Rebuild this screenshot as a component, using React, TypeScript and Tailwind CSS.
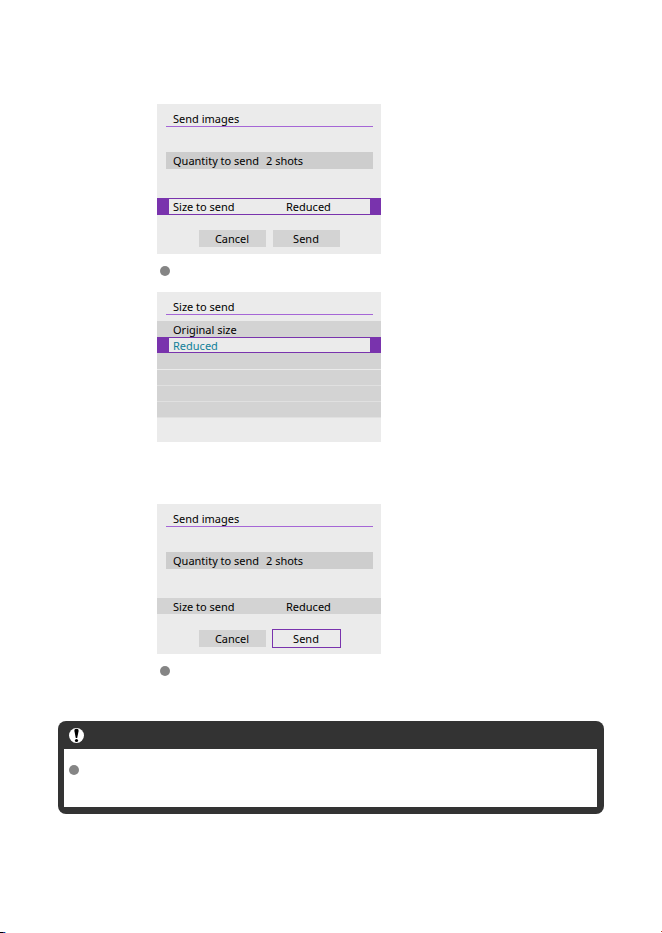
import type { ReactNode } from "react";

const Screen = ({ title, children }: { title: string; children: ReactNode }) => {
  return (
    <section className="flex min-h-[150px] w-56 flex-col bg-[#ebebeb] pt-[7px] text-[11px] leading-[15px] text-black">
      <h2 className="mr-2 ml-[9px] border-b border-[#a566d6] pl-[7px] font-normal">
        {title}
      </h2>
      {children}
    </section>
  );
};

const Quantity = () => {
  return (
    <div className="mt-[25px] mr-2 ml-[9px] flex h-[17px] items-center bg-[#cdcdcd] pl-[7px] whitespace-nowrap">
      <span className="w-[93px]">Quantity to send</span>
      <span>2 shots</span>
    </div>
  );
};

const Bullet = () => {
  return <span className="block size-[10px] rounded-full bg-[#858585]" />;
};

const SendImages = ({ active }: { active: "size" | "send" }) => {
  return (
    <Screen title="Send images">
      <Quantity />
      {active === "size" ? (
        <button className="mt-[29px] flex h-[17px] bg-[#7933ad] py-px pr-[11px] pl-3 text-left">
          <span className="flex h-[15px] flex-1 items-center bg-[#ebebeb] pl-1">
            <span className="w-[113px]">Size to send</span>
            <span>Reduced</span>
          </span>
        </button>
      ) : (
        <button className="mt-[29px] flex h-4 items-center bg-[#d3d3d3] pl-4 text-left">
          <span className="w-[113px]">Size to send</span>
          <span>Reduced</span>
        </button>
      )}
      <div className="mt-auto mb-[7px] flex h-[17px] items-center justify-center gap-[7px]">
        <button className="h-[17px] w-[67px] bg-[#d3d3d3]">Cancel</button>
        {active === "send" ? (
          <button className="h-[17px] w-[67px] bg-[#ebebeb] outline outline-[#7933ad]">
            Send
          </button>
        ) : (
          <button className="h-[17px] w-[67px] bg-[#d3d3d3]">Send</button>
        )}
      </div>
    </Screen>
  );
};

const SizeToSend = () => {
  return (
    <Screen title="Size to send">
      <div className="mt-[6px] flex flex-col">
        <button className="flex h-4 items-center bg-[#d3d3d3] pl-4">
          Original size
        </button>
        <button className="flex h-4 bg-[#7933ad] py-px pr-[11px] pl-3">
          <span className="flex h-[14px] flex-1 items-center bg-[#ebebeb] pl-1 text-[#118099]">
            Reduced
          </span>
        </button>
        {/* Unused slots */}
        <div className="h-[17px] border-b border-[#ebebeb] bg-[#d3d3d3]" />
        <div className="h-4 border-b border-[#e0e0e0] bg-[#d3d3d3]" />
        <div className="h-4 border-b border-[#e0e0e0] bg-[#d3d3d3]" />
        <div className="h-4 border-b border-[#e0e0e0] bg-[#d3d3d3]" />
      </div>
    </Screen>
  );
};

const Caution = () => {
  return (
    <aside className="mx-[58px] mt-[45px] rounded-lg bg-[#333333] pr-[7px] pb-[7px] pl-[6px]">
      <div className="flex h-7 items-center pl-[5px]">
        <svg viewBox="0 0 15 15" className="size-[15px]" aria-hidden="true">
          <circle cx="7.5" cy="7.5" r="7.5" fill="#fff" />
          <path
            d="M7.5 0.8C6 0.8 5.3 1.7 5.4 3L6.8 10H8.2L9.6 3C9.7 1.7 9 0.8 7.5 0.8Z"
            fill="#000"
          />
          <circle cx="7.5" cy="12.5" r="1.6" fill="#000" />
        </svg>
      </div>
      <div className="h-[58px] bg-white pt-4 pl-[5px]">
        <Bullet />
      </div>
    </aside>
  );
};

const App = () => {
  return (
    <div className="flex min-h-screen flex-col bg-white font-['Noto_Sans','Open_Sans',sans-serif]">
      <main className="flex-1 pt-[104px]">
        <div className="flex flex-col pl-[157px]">
          <SendImages active="size" />
          <div className="pt-3 pb-4 pl-[3px]">
            <Bullet />
          </div>
          <SizeToSend />
          <div className="mt-[62px]">
            <SendImages active="send" />
          </div>
          <div className="pt-3 pl-[3px]">
            <Bullet />
          </div>
        </div>
        <Caution />
      </main>
      <footer className="flex h-[2px] items-end justify-between">
        <span className="flex">
          <span className="h-px w-[3px] bg-black" />
          <span className="h-px w-[2px] bg-[#2a2a90]" />
          <span className="h-px w-px bg-cyan-300" />
        </span>
        <span className="mb-px size-px bg-[#c04020]" />
      </footer>
    </div>
  );
};

export default App;
